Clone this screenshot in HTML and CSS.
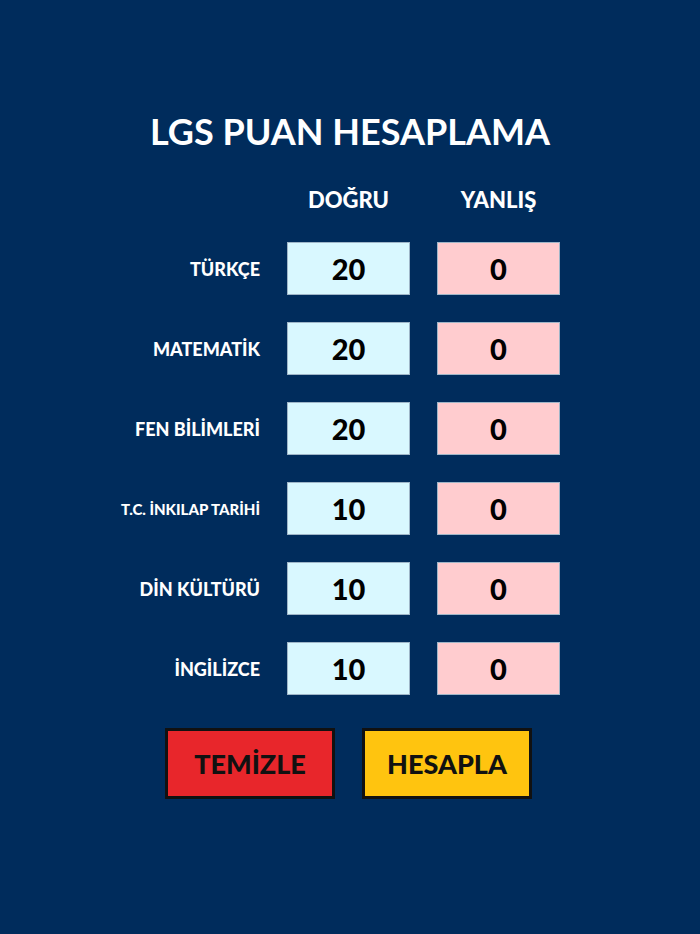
FILE: index.html
```html
<html>
<head>
	<title>LGS Puan Hesaplama</title>
	<link rel="stylesheet" href="styles.css">
</head>
<body>
	<h1>LGS PUAN HESAPLAMA</h1>
	<div class="grid">
		<div></div>
		<div class="head">DOĞRU</div>
		<div class="head">YANLIŞ</div>

		<label class="lesson">TÜRKÇE</label>
		<input class="dogru" type="text" value="20">
		<input class="yanlis" type="text" value="0">

		<label class="lesson">MATEMATİK</label>
		<input class="dogru" type="text" value="20">
		<input class="yanlis" type="text" value="0">

		<label class="lesson">FEN BİLİMLERİ</label>
		<input class="dogru" type="text" value="20">
		<input class="yanlis" type="text" value="0">

		<label class="lesson small">T.C. İNKILAP TARİHİ</label>
		<input class="dogru" type="text" value="10">
		<input class="yanlis" type="text" value="0">

		<label class="lesson">DİN KÜLTÜRÜ</label>
		<input class="dogru" type="text" value="10">
		<input class="yanlis" type="text" value="0">

		<label class="lesson">İNGİLİZCE</label>
		<input class="dogru" type="text" value="10">
		<input class="yanlis" type="text" value="0">
	</div>
	<div class="buttons">
		<button class="clear">TEMİZLE</button>
		<button class="calc">HESAPLA</button>
	</div>
</body>
</html>
```

FILE: styles.css
```css
body{
	margin: 0;
	background-color: #002c5c;
	font-family: "Lato", "Liberation Sans", sans-serif;
	font-weight: 900;
	color: white;
}
h1{
	margin: 111px 0 0 0;
	font-size: 36px;
	line-height: 40px;
	text-align: center;
}
.grid{
	display: grid;
	grid-template-columns: 260px 123px 123px;
	column-gap: 27px;
	row-gap: 27px;
	margin-top: 36px;
	align-items: center;
}
.head{
	text-align: center;
	font-size: 22px;
	line-height: 26px;
	margin-bottom: 2px;
}
.lesson{
	text-align: right;
	font-size: 18px;
}
.small{
	font-size: 15px;
}
input{
	box-sizing: border-box;
	width: 123px;
	height: 53px;
	border: 1px solid #9fb6c8;
	text-align: center;
	font-family: inherit;
	font-weight: 900;
	font-size: 29px;
	color: #000;
	outline: none;
}
.dogru{
	background-color: #d9f8ff;
}
.yanlis{
	background-color: #ffcccf;
}
.buttons{
	display: flex;
	gap: 27px;
	margin: 33px 0 0 165px;
}
button{
	width: 170px;
	height: 71px;
	border: 3px solid #111;
	font-family: inherit;
	font-weight: 900;
	font-size: 27px;
	color: #111;
	cursor: pointer;
}
.clear{
	background-color: #e8262b;
}
.calc{
	background-color: #ffc40f;
}
```
